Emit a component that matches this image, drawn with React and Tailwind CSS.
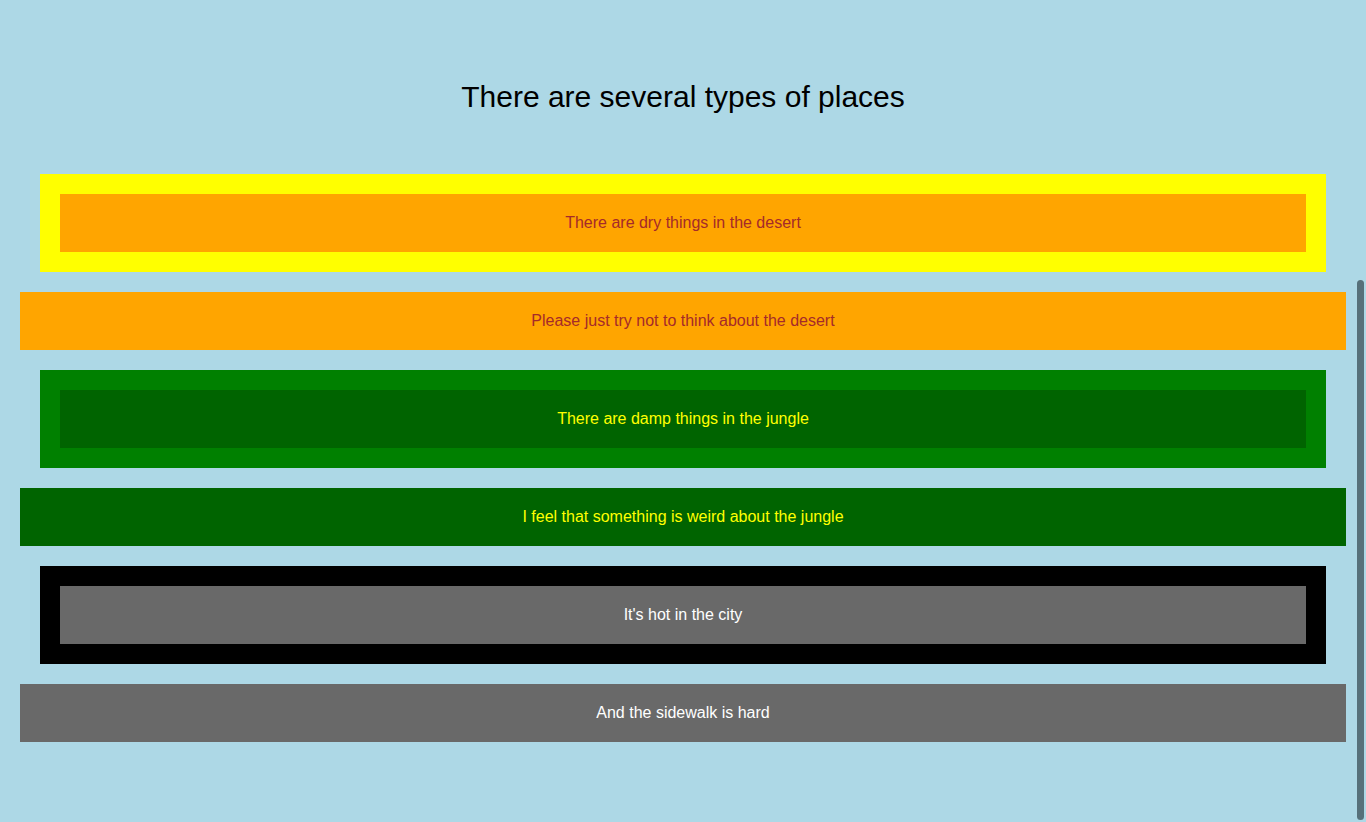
import React from "react";

const places = [
  {
    inner: "There are dry things in the desert",
    outer: "Please just try not to think about the desert",
    frame: "bg-[#ffff00]",
    fill: "bg-[#ffa500]",
    text: "text-[#a52a2a]",
  },
  {
    inner: "There are damp things in the jungle",
    outer: "I feel that something is weird about the jungle",
    frame: "bg-[#008000]",
    fill: "bg-[#006400]",
    text: "text-[#ffff00]",
  },
  {
    inner: "It's hot in the city",
    outer: "And the sidewalk is hard",
    frame: "bg-black",
    fill: "bg-[#696969]",
    text: "text-white",
  },
];

const App = () => {
  return (
    <div
      className="min-h-screen bg-[#add8e6] px-5 pt-[79px] pb-10"
      style={{ fontFamily: '"Liberation Sans", Arial, sans-serif' }}
    >
      <h1 className="text-center text-[30px] leading-[36px] text-black">
        There are several types of places
      </h1>

      <div className="mt-[59px] flex flex-col gap-5">
        {places.map((p) => (
          <React.Fragment key={p.inner}>
            {/* framed place */}
            <div className={`mx-5 p-5 ${p.frame}`}>
              <div
                className={`flex h-[58px] items-center justify-center text-base ${p.fill} ${p.text}`}
              >
                {p.inner}
              </div>
            </div>
            {/* full-width band */}
            <div
              className={`flex h-[58px] items-center justify-center text-base ${p.fill} ${p.text}`}
            >
              {p.outer}
            </div>
          </React.Fragment>
        ))}
      </div>

      {/* overlay scrollbar */}
      <div className="fixed right-[2px] top-[280px] bottom-[2px] w-[7px] rounded-full bg-[#56707a]" />
    </div>
  );
};

export default App;
